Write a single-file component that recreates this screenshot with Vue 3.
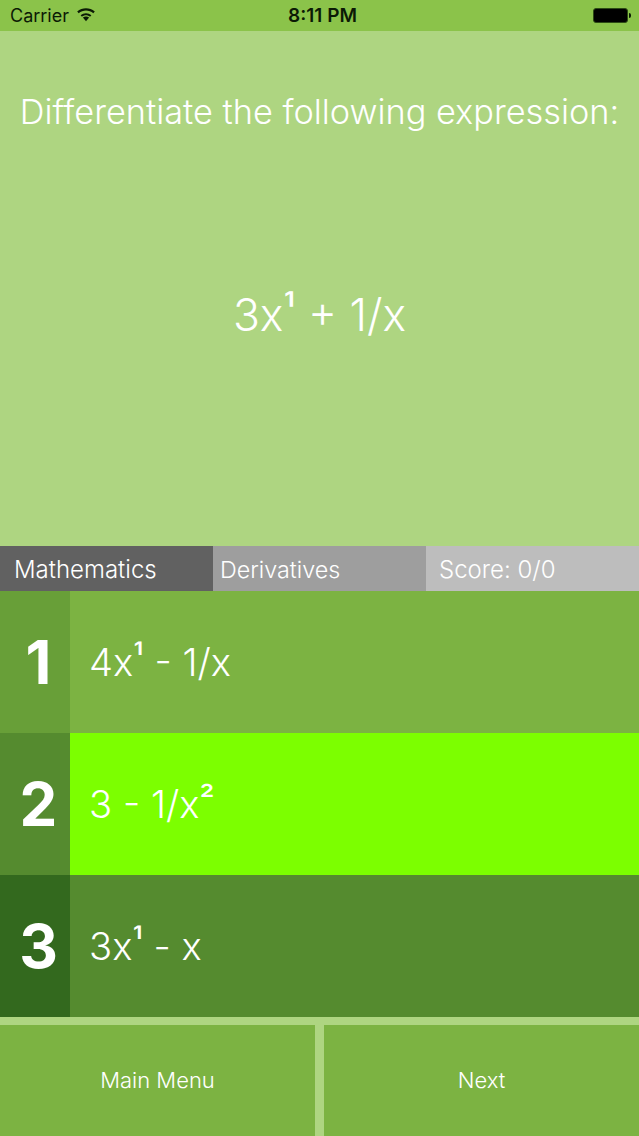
<script setup>
const answers = [
  { n: '1', parts: ['4x', '¹', ' - 1/x'], cls: 'a1' },
  { n: '2', parts: ['3 - 1/x', '²', ''], cls: 'a2' },
  { n: '3', parts: ['3x', '¹', ' - x'], cls: 'a3' },
]
</script>

<template>
  <div class="screen">
    <header class="status">
      <div class="status-left">
        <span class="carrier">Carrier</span>
        <svg class="wifi" width="20" height="15" viewBox="0 0 20 15">
          <path d="M10 14.2 L6.9 10.6 C8.7 9.1 11.3 9.1 13.1 10.6 Z" fill="#0b1a05" />
          <path d="M4.6 8.2 C7.7 5.5 12.3 5.5 15.4 8.2 L14 9.7 C11.7 7.7 8.3 7.7 6 9.7 Z" fill="#0b1a05" />
          <path d="M1.2 4.6 C6.3 0.2 13.7 0.2 18.8 4.6 L17.3 6.3 C13.1 2.6 6.9 2.6 2.7 6.3 Z" fill="#0b1a05" />
        </svg>
      </div>
      <span class="time">8:11 PM</span>
      <div class="battery"><span class="cell"></span><span class="tip"></span></div>
    </header>

    <section class="question">
      <h1 class="prompt">Differentiate the following expression:</h1>
      <div class="expr">3x<span class="sup-lg">¹</span> + 1/x</div>
    </section>

    <div class="info">
      <div class="info-cell dark">Mathematics</div>
      <div class="info-cell mid">Derivatives</div>
      <div class="info-cell light">Score: 0/0</div>
    </div>

    <div class="answers">
      <div v-for="a in answers" :key="a.n" class="answer" :class="a.cls">
        <div class="num">{{ a.n }}</div>
        <div class="text"><span>{{ a.parts[0] }}<span class="sup">{{ a.parts[1] }}</span>{{ a.parts[2] }}</span></div>
      </div>
    </div>

    <div class="actions">
      <button class="action">Main Menu</button>
      <button class="action">Next</button>
    </div>
  </div>
</template>

<style scoped>
.screen {
  width: 639px;
  height: 1136px;
  display: flex;
  flex-direction: column;
  background: #aed581;
  font-family: Inter, "Noto Sans", sans-serif;
  font-weight: 300;
  color: #fff;
  overflow: hidden;
}
.status {
  height: 31px;
  flex: none;
  background: #8bc34a;
  display: grid;
  grid-template-columns: 1fr auto 1fr;
  align-items: center;
  color: #0b1a05;
  padding: 0 8px 0 10px;
}
.status-left {
  display: flex;
  align-items: center;
  gap: 7px;
}
.carrier {
  font-size: 18px;
  font-weight: 400;
}
.wifi {
  display: block;
  margin-top: -3px;
}
.time {
  font-size: 19px;
  font-weight: 600;
  margin-left: 4px;
}
.battery {
  justify-self: end;
  display: flex;
  align-items: center;
}
.cell {
  width: 35px;
  height: 15px;
  background: #000;
  border-radius: 3px;
  border: 1px solid #2c4a14;
  box-sizing: border-box;
}
.tip {
  width: 2px;
  height: 5px;
  background: #0b1a05;
  margin-left: 1px;
  border-radius: 0 2px 2px 0;
}
.question {
  height: 515px;
  flex: none;
  display: flex;
  flex-direction: column;
  align-items: center;
}
.prompt {
  margin: 59px 0 0;
  font-size: 34.3px;
  line-height: 44px;
  font-weight: 300;
  white-space: nowrap;
}
.expr {
  margin-top: 154px;
  font-size: 44.5px;
  line-height: 54px;
}
.sup-lg {
  display: inline-block;
  font-size: 39px;
  font-weight: 400;
  line-height: 0;
  transform: translateY(-7px);
}
.info {
  height: 45px;
  flex: none;
  display: grid;
  grid-template-columns: 213px 213px 213px;
}
.info-cell {
  display: flex;
  align-items: center;
  font-size: 24px;
  font-weight: 300;
  padding: 1px 0 0 7px;
}
.dark { background: #616161; padding-left: 14px; }
.mid { background: #9e9e9e; font-size: 23.3px; }
.light { background: #bdbdbd; padding-left: 13px; }
.answers {
  flex: none;
  display: flex;
  flex-direction: column;
}
.answer {
  height: 142px;
  display: flex;
}
.num {
  width: 70px;
  flex: none;
  box-sizing: border-box;
  padding-left: 7px;
  display: flex;
  align-items: center;
  justify-content: center;
  font-size: 60px;
  font-weight: 700;
}
.text {
  flex: 1;
  display: flex;
  align-items: center;
  padding-left: 19px;
  font-size: 38.2px;
}
.sup {
  display: inline-block;
  font-size: 34px;
  font-weight: 400;
  line-height: 0;
  transform: translateY(-6px);
}
.a1 .num { background: #689f38; }
.a1 .text { background: #7cb342; }
.a2 .num { background: #558b2f; }
.a2 .text { background: #7cff00; }
.a3 .num { background: #33691e; }
.a3 .text { background: #558b2f; }
.actions {
  flex: 1;
  margin-top: 8px;
  display: grid;
  grid-template-columns: 315px 315px;
  justify-content: space-between;
}
.action {
  border: 0;
  padding: 0 0 2px;
  background: #7cb342;
  color: #fff;
  font-family: inherit;
  font-weight: 300;
  font-size: 22px;
}
</style>
